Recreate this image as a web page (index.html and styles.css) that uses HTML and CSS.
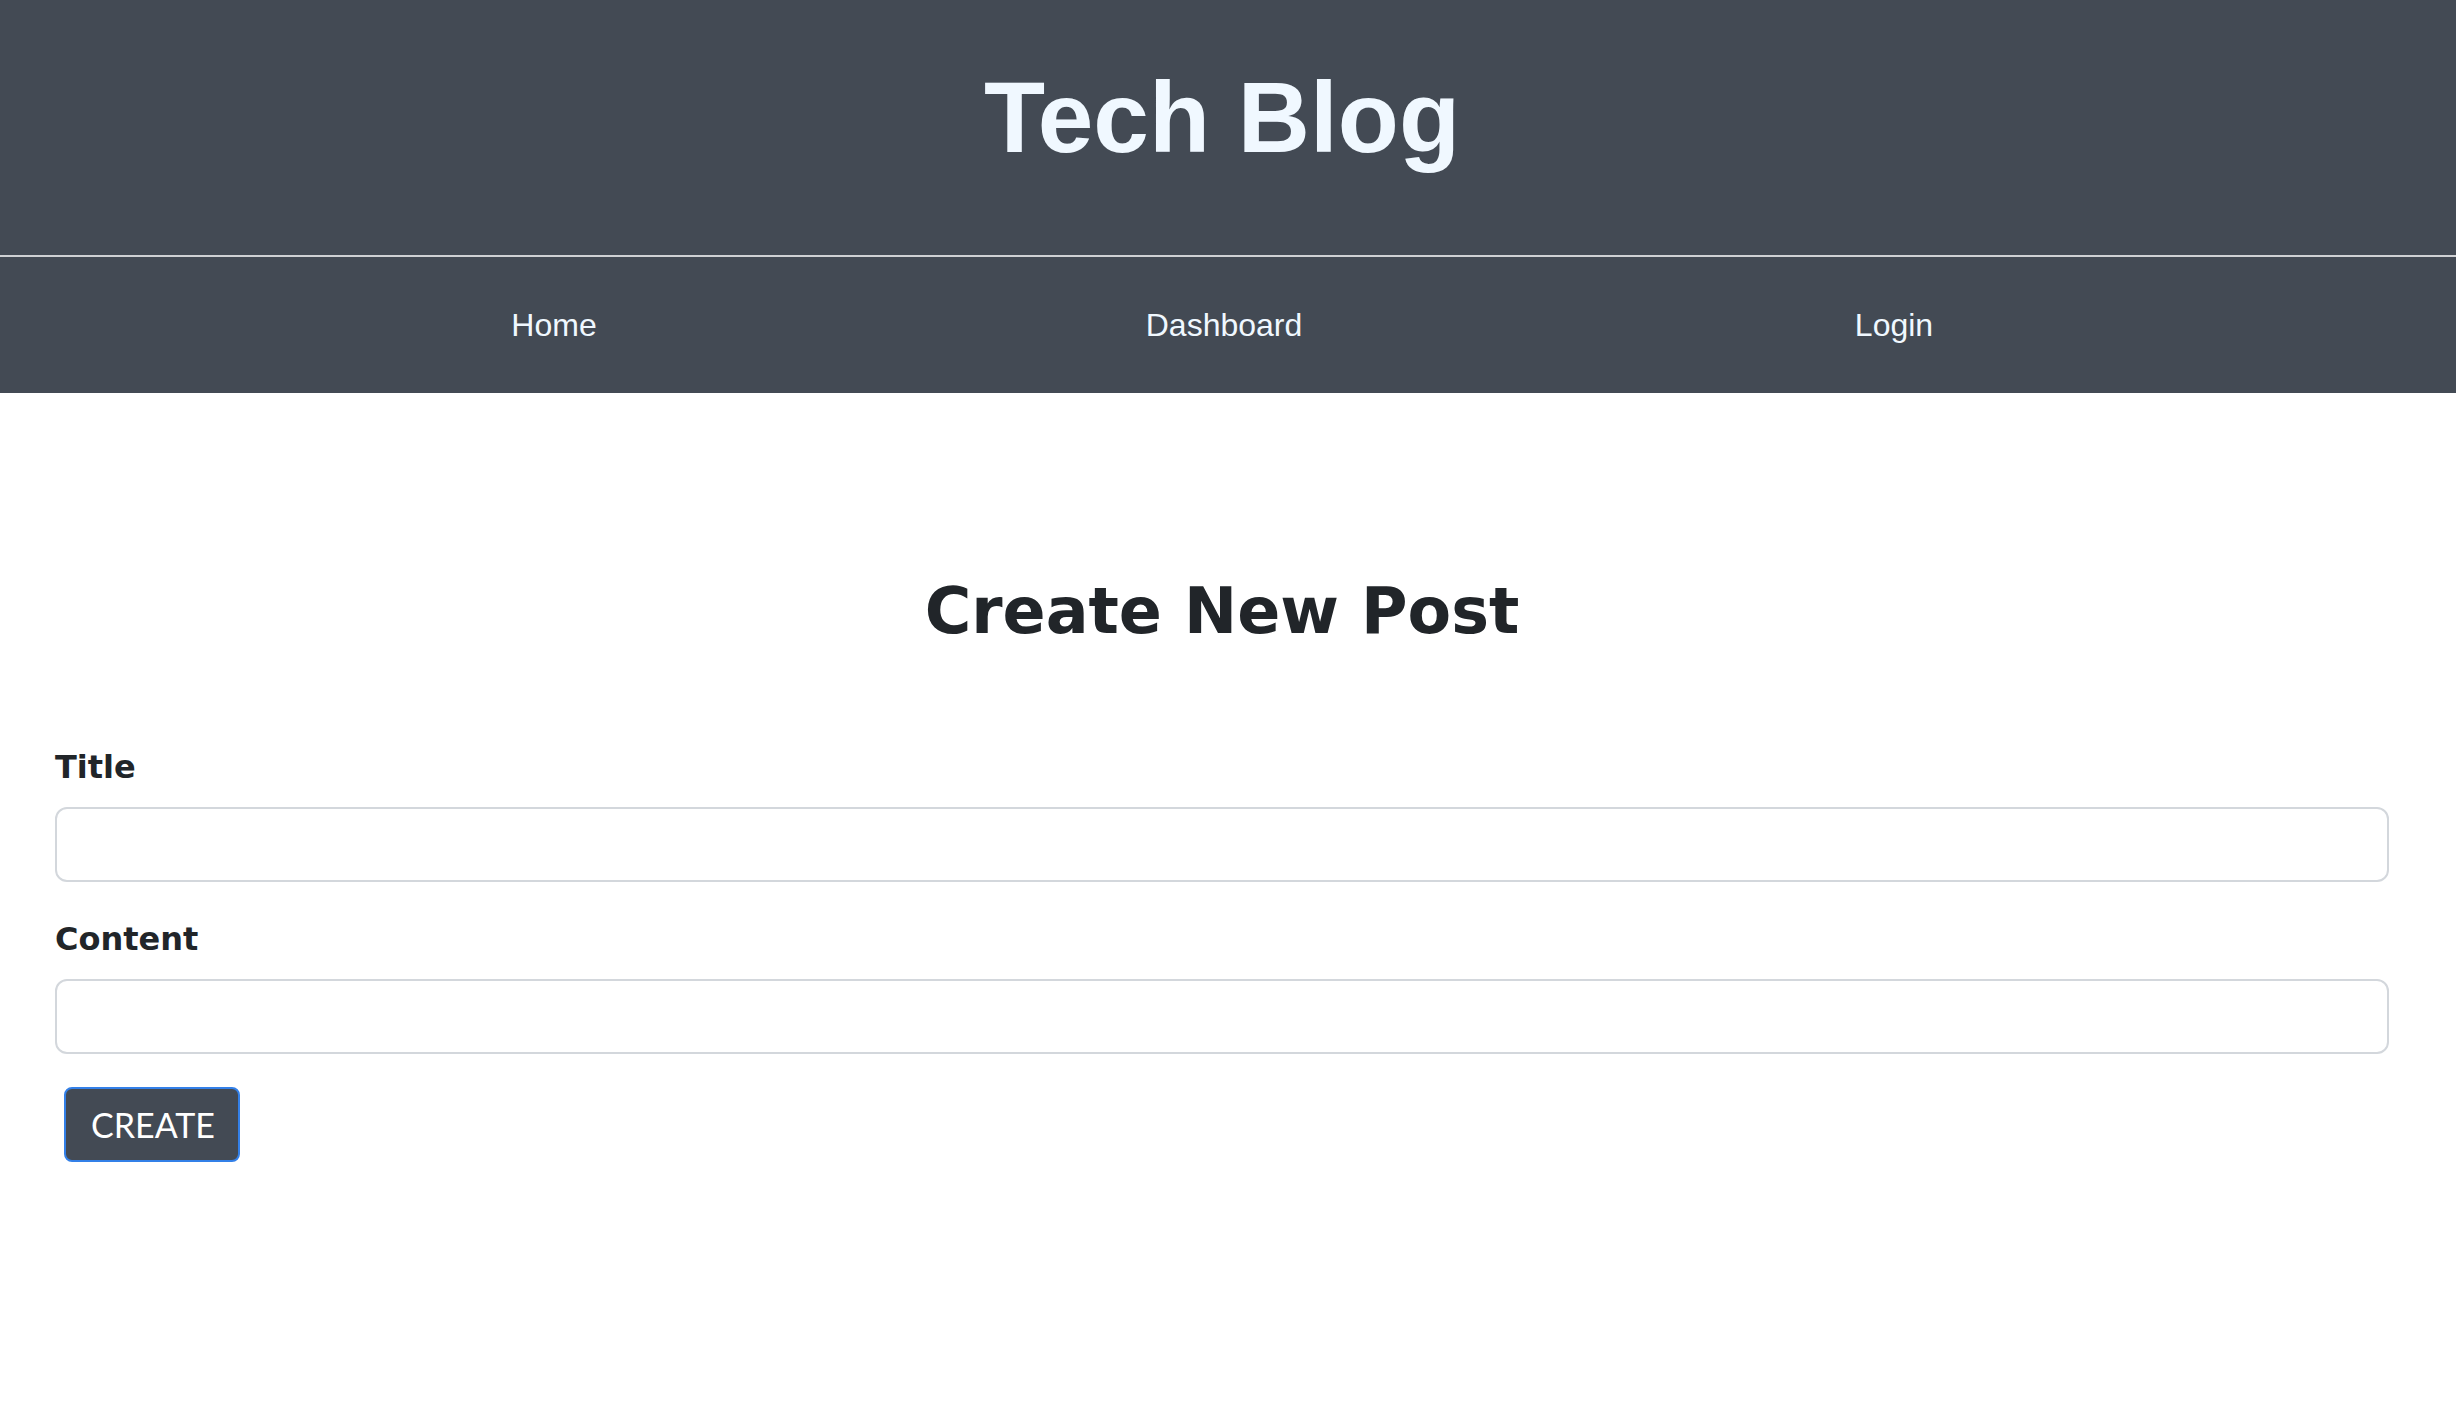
FILE: index.html
```html
<!DOCTYPE html>
<html lang="en">
<head>
<meta charset="utf-8">
<title>Tech Blog</title>
<link rel="stylesheet" href="styles.css">
</head>
<body>
<header class="site-header">
  <h1 class="site-title">Tech Blog</h1>
</header>
<nav class="site-nav">
  <a class="nav-link" href="#">Home</a>
  <a class="nav-link" href="#">Dashboard</a>
  <a class="nav-link" href="#">Login</a>
</nav>
<main class="main">
  <h2 class="page-title">Create New Post</h2>
  <form class="post-form">
    <label class="form-label" for="title">Title</label>
    <input class="form-control" id="title" type="text">
    <label class="form-label form-label-spaced" for="content">Content</label>
    <input class="form-control" id="content" type="text">
    <button class="btn-create" type="button">CREATE</button>
  </form>
</main>
</body>
</html>
```

FILE: styles.css
```css
html, body {
  margin: 0;
  padding: 0;
  background: #ffffff;
}

.site-header {
  background: #434a54;
  height: 195px;
  padding: 60px 12px 0 0;
  border-bottom: 2px solid #cfd1d4;
}

.site-title {
  margin: 0;
  text-align: center;
  font-family: "Liberation Sans", Arial, sans-serif;
  font-weight: 700;
  font-size: 100px;
  line-height: normal;
  letter-spacing: 0;
  color: #f0f8ff;
}

.site-nav {
  background: #434a54;
  height: 136px;
  padding-right: 8px;
  display: grid;
  grid-template-columns: repeat(3, 670px);
  justify-content: center;
  align-items: center;
}

.nav-link {
  justify-self: center;
  font-family: "Liberation Sans", Arial, sans-serif;
  font-size: 32px;
  color: #f0f8ff;
  text-decoration: none;
}

.main {
  padding: 180px 67px 0 55px;
}

.page-title {
  margin: 0;
  text-align: center;
  font-family: "DejaVu Sans", Verdana, sans-serif;
  font-weight: 700;
  font-size: 63.5px;
  line-height: 1.2;
  color: #212529;
}

.post-form {
  display: flex;
  flex-direction: column;
  align-items: stretch;
  padding-top: 94px;
}

.form-label {
  font-family: "DejaVu Sans", Verdana, sans-serif;
  font-weight: 700;
  font-size: 32px;
  line-height: 48px;
  color: #212529;
  margin-bottom: 16px;
}

.form-label-spaced {
  margin-top: 33px;
}

.form-control {
  box-sizing: border-box;
  height: 75px;
  margin: 0;
  padding: 12px 24px;
  border: 2px solid #d3d7dc;
  border-radius: 12px;
  background: #ffffff;
  font-family: "DejaVu Sans", sans-serif;
  font-size: 32px;
}

.btn-create {
  align-self: flex-start;
  box-sizing: border-box;
  height: 75px;
  margin: 33px 0 0 9px;
  padding: 0 23px 0 25px;
  border: 2px solid #3380e8;
  border-radius: 8px;
  background: #434a54;
  color: #ffffff;
  font-family: Lato, "Open Sans", sans-serif;
  font-size: 34px;
  line-height: 1;
}
```
